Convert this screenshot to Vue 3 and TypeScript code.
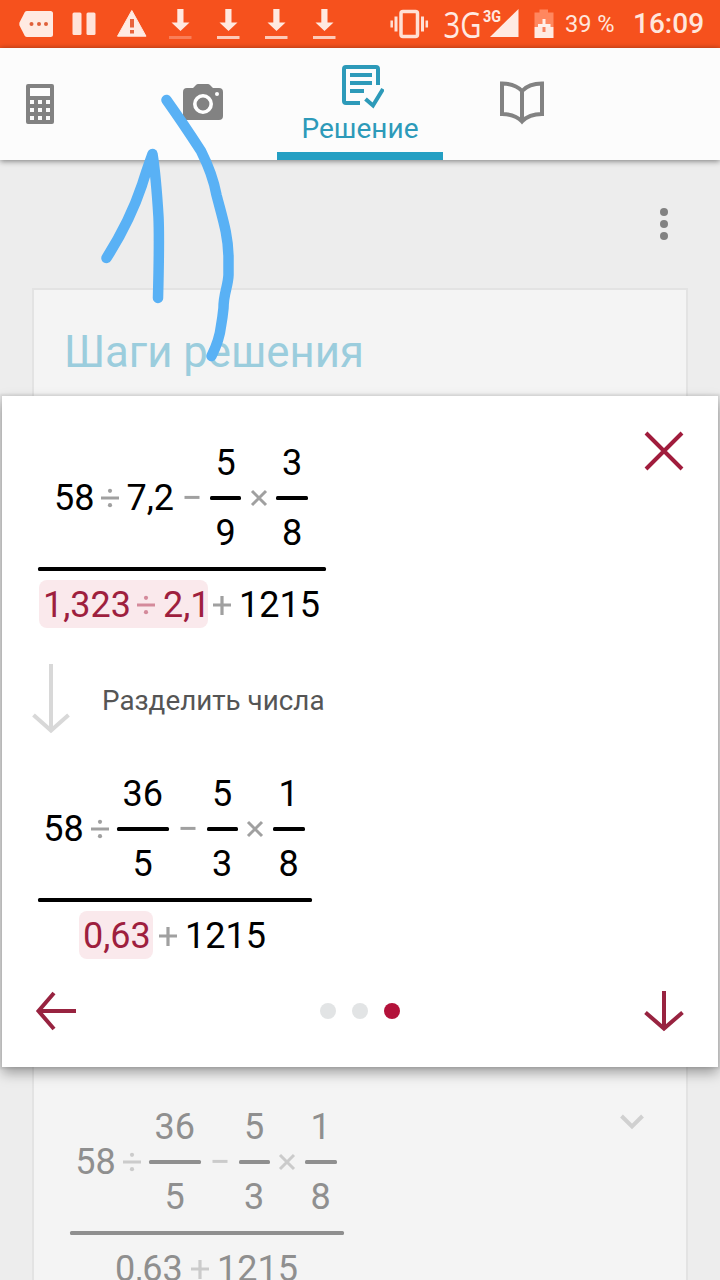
<script setup lang="ts">
import { defineComponent, h, type VNode } from 'vue'

type Op = '÷' | '−' | '×' | '+'
type Token =
  | { kind: 'num'; text: string }
  | { kind: 'op'; op: Op; w: number }
  | { kind: 'frac'; top: string; bottom: string; w: number }
  | { kind: 'mark'; w: number; items: Token[] }

interface Expr {
  width: number
  top: Token[]
  bottom: Token[]
}

const num = (text: string): Token => ({ kind: 'num', text })
const op = (o: Op, w: number): Token => ({ kind: 'op', op: o, w })
const frac = (top: string, bottom: string, w: number): Token => ({ kind: 'frac', top, bottom, w })

const before: Expr = {
  width: 288,
  top: [num('58'), op('÷', 32), num('7,2'), op('−', 36), frac('5', '9', 31), op('×', 35), frac('3', '8', 32)],
  bottom: [
    { kind: 'mark', w: 169, items: [num('1,323'), op('÷', 32), num('2,1')] },
    op('+', 31),
    num('1215'),
  ],
}

const after: Expr = {
  width: 274,
  top: [num('58'), op('÷', 33), frac('36', '5', 52), op('−', 38), frac('5', '3', 31), op('×', 35), frac('1', '8', 32)],
  bottom: [{ kind: 'mark', w: 74, items: [num('0,63')] }, op('+', 32), num('1215')],
}

const opShapes: Record<Op, () => VNode[]> = {
  '÷': () => [
    h('path', { d: 'M1 10H19', 'stroke-width': 3 }),
    h('circle', { cx: 10, cy: 2.8, r: 2.1, fill: 'currentColor', stroke: 'none' }),
    h('circle', { cx: 10, cy: 17.2, r: 2.1, fill: 'currentColor', stroke: 'none' }),
  ],
  '−': () => [h('path', { d: 'M2.5 9.4H17.5', 'stroke-width': 3 })],
  '×': () => [h('path', { d: 'M3 3L17 17M17 3L3 17', 'stroke-width': 3 })],
  '+': () => [h('path', { d: 'M1 10H19M10 1V20', 'stroke-width': 3.2 })],
}

function renderToken(t: Token): VNode {
  switch (t.kind) {
    case 'num':
      return h('span', { class: 'num' }, t.text)
    case 'op':
      return h('span', { class: 'op', style: { width: t.w + 'px' } }, [
        h('svg', { width: 20, height: 20, viewBox: '0 0 20 20', fill: 'none', stroke: 'currentColor' }, opShapes[t.op]()),
      ])
    case 'frac':
      return h('span', { class: 'frac', style: { width: t.w + 'px' } }, [
        h('span', { class: 'num' }, t.top),
        h('i', { class: 'bar' }),
        h('span', { class: 'num' }, t.bottom),
      ])
    case 'mark':
      return h('span', { class: 'mark', style: { width: t.w + 'px' } }, t.items.map(renderToken))
  }
}

const MathExpr = defineComponent({
  props: { expr: { type: Object, required: true } },
  setup(props) {
    return () => {
      const e = props.expr as Expr
      return h('div', { class: 'expr', style: { width: e.width + 'px' } }, [
        h('div', { class: 'row upper' }, e.top.map(renderToken)),
        h('i', { class: 'bar main' }),
        h('div', { class: 'row lower' }, e.bottom.map(renderToken)),
      ])
    }
  },
})

const downloads = [0.3, 0.8, 0.8, 0.8]
const pages = [false, false, true]
</script>

<template>
  <div class="screen">
    <div class="status">
      <div class="notes">
        <svg width="48" height="48" viewBox="0 0 48 48">
          <path d="M15 11H38.5Q41 11 41 13.500V34.500Q41 37 38.500 37H15Q13.500 37 12.700 35.700L7.500 25.500Q7 24 7.500 22.500L12.700 12.300Q13.500 11 15 11Z" fill="#ffeae2" />
          <circle v-for="x in [19.500, 27, 34]" :key="x" :cx="x" cy="24" r="2" fill="#e0603a" />
        </svg>
        <svg width="48" height="48" viewBox="0 0 48 48" fill="#ffe3d9">
          <rect x="12.500" y="12.500" width="9" height="22.500" rx="1.500" />
          <rect x="26.500" y="12.500" width="9" height="22.500" rx="1.500" />
        </svg>
        <svg width="48" height="48" viewBox="0 0 48 48">
          <path d="M23.800 10.500L38 36.200H9.500Z" fill="#ffeae2" stroke="#ffeae2" stroke-linejoin="round" />
          <path d="M24 19V27.500M24 30V33.500" stroke="#e8633c" stroke-width="4" />
        </svg>
        <svg v-for="(o, i) in downloads" :key="i" width="48" height="48" viewBox="0 0 48 48" fill="#ffe9e0">
          <path d="M21.300 9H27.500V22.500H33.500L24.500 31L15.500 22.500H21.300Z" />
          <rect x="13" y="36" width="22.500" height="3" :opacity="o" />
        </svg>
      </div>
      <div class="system">
        <svg width="40" height="48" viewBox="0 0 40 48" fill="none" stroke="#ffe0d5">
          <rect x="12" y="11.500" width="16.500" height="25" rx="2" stroke-width="3.500" />
          <path d="M7 16.500V31.500M33.500 16.500V31.500" stroke-width="3" />
          <path d="M2.700 20.500V27.500M37.800 20.500V27.500" stroke-width="2.500" />
        </svg>
        <svg class="signal" width="80" height="48" viewBox="0 0 80 48" fill="#ffeae2">
          <text class="net" x="2.500" y="37.500" textLength="38" lengthAdjust="spacingAndGlyphs">3G</text>
          <text class="net-small" x="42" y="21.500" textLength="18" lengthAdjust="spacingAndGlyphs">3G</text>
          <path d="M77.500 9V37H49Z" />
        </svg>
        <svg class="battery" width="20" height="48" viewBox="0 0 20 48">
          <path d="M5.500 9.500H14V12.500H19.500V27H0.500V12.500H5.500Z" fill="#ff875f" />
          <rect x="0.500" y="27" width="19" height="11" fill="#ffeae2" />
          <path d="M4 25.500H16.500" stroke="#fff0ea" stroke-width="3" />
          <path d="M10 19V27" stroke="#fff0ea" stroke-width="3" />
          <path d="M10 27V32" stroke="#f9835f" stroke-width="3" />
        </svg>
        <span class="percent">39 %</span>
        <span class="clock">16:09</span>
      </div>
    </div>

    <nav class="tabs">
      <button class="tab first" aria-label="Калькулятор">
        <svg width="28" height="40" viewBox="0 0 28 40">
          <path fill="#828282" fill-rule="evenodd" d="M2 0H26Q28 0 28 2V38Q28 40 26 40H2Q0 40 0 38V2Q0 0 2 0ZM4 4V12H24V4ZM4 16V20H8V16ZM12 16V20H16V16ZM20 16V20H24V16ZM4 24V28H8V24ZM12 24V28H16V24ZM20 24V28H24V24ZM4 32V36H8V32ZM12 32V36H16V32ZM20 32V36H24V32Z" />
        </svg>
      </button>
      <button class="tab camera" aria-label="Камера">
        <svg width="40" height="36" viewBox="0 0 40 36">
          <path d="M4 4H10L13 1Q14 0 15 0H25Q26 0 27 1L30 4H36Q40 4 40 8V32Q40 36 36 36H4Q0 36 0 32V8Q0 4 4 4Z" fill="#828282" />
          <circle cx="20" cy="20" r="8.200" fill="none" stroke="#fff" stroke-width="3.600" />
          <circle cx="34" cy="10" r="2" fill="#fff" />
        </svg>
      </button>
      <button class="tab active">
        <svg width="42" height="44" viewBox="0 0 42 44" fill="none" stroke="#2d9ab9" stroke-width="4">
          <path d="M18 38H4Q2 38 2 36V4Q2 2 4 2H34Q36 2 36 4V20" />
          <path d="M8 10H30M8 18H30M8 26H22" />
          <path d="M23.500 34L31 40.500L41 24" />
        </svg>
        <span>Решение</span>
      </button>
      <button class="tab book" aria-label="Учебник">
        <svg width="44" height="44" viewBox="0 0 44 44" fill="none" stroke="#828282" stroke-width="4">
          <path d="M2 2.500Q15 2.500 22 10Q29 2.500 42 2.500V33Q29 33 22 40.500Q15 33 2 33ZM22 9V41" />
        </svg>
      </button>
    </nav>

    <main class="content">
      <div class="more"><i v-for="n in 3" :key="n" /></div>

      <section class="steps">
        <h1>Шаги решения</h1>
        <div class="result">
          <MathExpr :expr="after" class="faded" />
          <svg class="chevron" width="24" height="16" viewBox="0 0 24 16" fill="none" stroke="#d0d0d0" stroke-width="4">
            <path d="M1.500 2L12 12.500L22.500 2" />
          </svg>
        </div>
      </section>

      <section class="sheet">
        <svg class="close" width="40" height="40" viewBox="0 0 40 40" fill="none" stroke="#a01c3c" stroke-width="4">
          <path d="M2 2L38 38M38 2L2 38" />
        </svg>
        <MathExpr :expr="before" />
        <div class="action">
          <svg width="38" height="70" viewBox="0 0 38 70" fill="none" stroke="#d8d8d8" stroke-width="4">
            <path d="M19 0V66M1.500 51L19 66.500L36.500 51" />
          </svg>
          <span>Разделить числа</span>
        </div>
        <MathExpr :expr="after" />
        <footer class="pager">
          <svg width="42" height="42" viewBox="0 0 42 42" fill="none" stroke="#982340" stroke-width="4">
            <path d="M42 21H5M20 3L4.500 21L20 39" />
          </svg>
          <div class="dots"><i v-for="(on, i) in pages" :key="i" :class="{ on }" /></div>
          <svg width="42" height="42" viewBox="0 0 42 42" fill="none" stroke="#982340" stroke-width="4">
            <path d="M21 1V38M2.500 22.500L21 38.500L39.500 22.500" />
          </svg>
        </footer>
      </section>
    </main>

    <svg class="ink" width="720" height="1280" viewBox="0 0 720 1280">
      <path d="M106.500 258Q130 221 142 185Q146 172 152.500 154Q156 176 158.500 217Q159.500 240 158 298" />
      <path d="M166.500 100C180 119 190 134 201 151C208 165 214 181 216.500 195C223 220 228 235 228.500 256V275C228 287 223.500 293 223.500 308Q222.500 318 221 326Q219.500 340 211.500 356" />
    </svg>
  </div>
</template>

<style>
html,
body {
  background: #ededed;
  overflow: hidden;
}

.expr {
  font: 36px/42px Roboto, sans-serif;
  color: #000;
}
.expr .row {
  display: flex;
  align-items: center;
  justify-content: center;
  box-sizing: border-box;
  white-space: nowrap;
}
.expr .row > *,
.expr .mark > * {
  flex: none;
}
.expr .upper {
  height: 112px;
  padding-right: 2px;
}
.expr .upper > .num {
  margin-top: -1px;
}
.expr .lower {
  height: 48px;
  padding-right: 5px;
}
.expr .lower .num,
.expr .lower .op {
  padding-top: 2px;
}
.expr .lower .op {
  box-sizing: border-box;
  padding-right: 3px;
}
.expr .op {
  display: flex;
  justify-content: center;
  color: #a0a0a0;
}
.expr .frac {
  display: flex;
  flex-direction: column;
  align-items: center;
}
.expr .bar {
  display: block;
  width: 100%;
  height: 4px;
  margin: 12px 0;
  border-radius: 1.5px;
  background: currentColor;
}
.expr .bar.main {
  margin: 13px 0 9px;
}
.expr .mark {
  display: flex;
  align-items: center;
  box-sizing: border-box;
  height: 48px;
  padding-left: 4px;
  border-radius: 8px;
  background: #fae9ec;
  color: #9e1f3e;
}
.expr .mark .op {
  color: #d48a9b;
}
.expr.faded {
  color: #8f8f8f;
}
.expr.faded .op {
  color: #cbcbcb;
}
.expr.faded .mark {
  background: none;
  color: inherit;
}
</style>

<style scoped>
.screen {
  position: relative;
  display: flex;
  flex-direction: column;
  width: 720px;
  height: 1280px;
  overflow: hidden;
  background: #ededed;
  font-family: Roboto, sans-serif;
}
svg {
  display: block;
  flex: none;
}

.status {
  display: flex;
  justify-content: space-between;
  height: 48px;
  flex: none;
  background: #f6511d;
  color: #ffe6dc;
}
.notes {
  display: flex;
  padding-left: 12px;
}
.system {
  display: flex;
  align-items: center;
  width: 331px;
  white-space: nowrap;
}
.signal {
  margin-left: 12px;
  overflow: visible;
}
.net {
  font: 400 37px 'Open Sans', sans-serif;
}
.net-small {
  font: 700 17px Roboto, sans-serif;
}
.battery {
  margin-left: 13px;
}
.percent {
  margin-left: 11px;
  width: 68px;
  font-size: 23.6px;
  line-height: 50px;
}
.clock {
  font-size: 28px;
  font-weight: 500;
  line-height: 52px;
}

.tabs {
  position: relative;
  z-index: 1;
  display: grid;
  grid-template-columns: 129px 148px 166px 158px;
  height: 112px;
  flex: none;
  background: #fcfcfc;
  box-shadow: 0 1px 6px rgba(0, 0, 0, 0.5);
}
.tab {
  display: flex;
  flex-direction: column;
  align-items: center;
  box-sizing: border-box;
  padding: 0;
  border: 0;
  background: none;
  font: 28px/32px Roboto, sans-serif;
}
.first {
  align-items: flex-start;
  padding: 36px 0 0 26px;
}
.camera {
  padding-top: 36px;
}
.book {
  padding-top: 33px;
}
.active {
  padding-top: 17px;
  border-bottom: 8px solid #249fc3;
  color: #2d9ab9;
}
.active svg {
  margin-left: 5px;
}
.active span {
  margin-top: 4px;
}

.content {
  position: relative;
  display: flex;
  flex-direction: column;
  flex: 1;
}
.more {
  display: flex;
  flex-direction: column;
  align-items: center;
  gap: 4px;
  width: 8px;
  margin: 48px 52px 48px auto;
}
.more i {
  width: 8px;
  height: 8px;
  border-radius: 50%;
  background: #828282;
}
.steps {
  box-sizing: border-box;
  width: 656px;
  height: 1010px;
  flex: none;
  margin-left: 32px;
  padding: 36px 0 0 30px;
  border: 2px solid #e3e3e3;
  background: #f4f4f4;
}
h1 {
  margin: 0;
  font-size: 43.7px;
  font-weight: 400;
  line-height: 52px;
  color: #9bcddd;
}
.result {
  display: flex;
  justify-content: space-between;
  margin-top: 728px;
  padding: 0 42px 0 6px;
}
.chevron {
  margin-top: 8px;
}

/* The step sheet floats over the solution list. */
.sheet {
  position: absolute;
  top: 236px;
  left: 2px;
  box-sizing: border-box;
  width: 716px;
  height: 671px;
  padding: 46px 0 0 36px;
  background: #fff;
  box-shadow: 0 6px 12px rgba(0, 0, 0, 0.34), 0 0 2px 2px rgba(0, 0, 0, 0.08);
}
.close {
  position: absolute;
  top: 35px;
  right: 34px;
}
.action {
  display: flex;
  align-items: center;
  gap: 32px;
  height: 70px;
  margin: 36px 0 39px -6px;
  color: #555;
  font-size: 27.8px;
}
.action span {
  padding-top: 2px;
}
.pager {
  display: flex;
  align-items: center;
  justify-content: space-between;
  margin: 31px 33px 0 -4px;
}
.dots {
  display: flex;
  gap: 16px;
}
.dots i {
  width: 16px;
  height: 16px;
  border-radius: 50%;
  background: #e2e4e5;
}
.dots .on {
  background: #b3123a;
}

.ink {
  position: absolute;
  inset: 0;
  z-index: 2;
  pointer-events: none;
  fill: none;
  stroke: #59b1f5;
  stroke-width: 10.5px;
  stroke-linecap: round;
  stroke-linejoin: round;
}
</style>
